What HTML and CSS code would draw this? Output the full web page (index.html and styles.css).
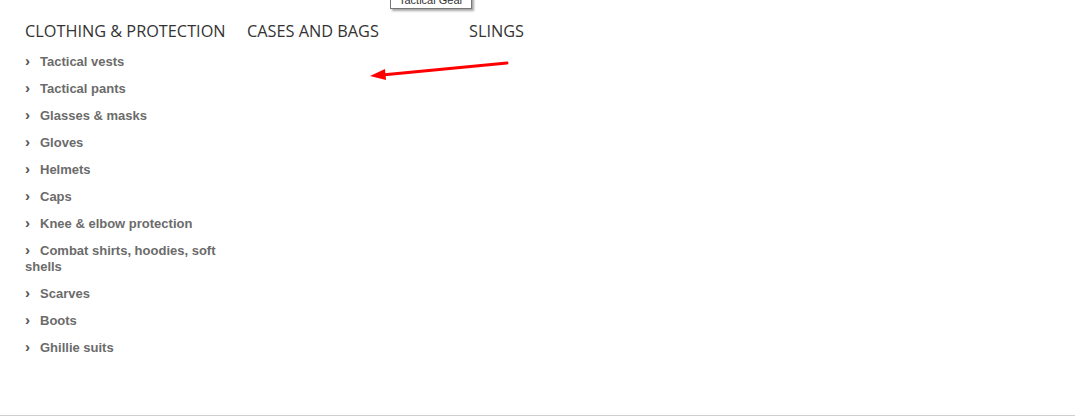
FILE: index.html
```html
<!DOCTYPE html>
<html lang="en">
<head>
  <meta charset="UTF-8">
  <title>Tactical Gear menu</title>
  <link rel="stylesheet" href="styles.css">
</head>
<body>
  <div class="menu">
    <div class="tooltip">Tactical Gear</div>

    <div class="column">
      <h3>Clothing &amp; Protection</h3>
      <ul>
        <li><a href="#">Tactical vests</a></li>
        <li><a href="#">Tactical pants</a></li>
        <li><a href="#">Glasses &amp; masks</a></li>
        <li><a href="#">Gloves</a></li>
        <li><a href="#">Helmets</a></li>
        <li><a href="#">Caps</a></li>
        <li><a href="#">Knee &amp; elbow protection</a></li>
        <li><a href="#">Combat shirts, hoodies, soft shells</a></li>
        <li><a href="#">Scarves</a></li>
        <li><a href="#">Boots</a></li>
        <li><a href="#">Ghillie suits</a></li>
      </ul>
    </div>

    <div class="column">
      <h3>Cases and bags</h3>
    </div>

    <div class="column">
      <h3>Slings</h3>
    </div>

    <svg class="arrow" width="150" height="24" viewBox="0 0 150 24">
      <line x1="139" y1="3" x2="14" y2="15" stroke="#ff0000" stroke-width="3" stroke-linecap="round"/>
      <polygon points="2,16 17,9 18,20" fill="#ff0000"/>
    </svg>
  </div>
</body>
</html>
```

FILE: styles.css
```css
html, body {
  margin: 0;
  padding: 0;
  background: #fff;
}

.menu {
  position: relative;
  display: flex;
  box-sizing: border-box;
  min-height: 416px;
  padding: 20px 0 0 25px;
  border-bottom: 1px solid #cfcfcf;
}

.column {
  width: 202px;
  padding-right: 20px;
}

.column h3 {
  margin: 0 0 12px;
  font-family: 'Open Sans', sans-serif;
  font-size: 16.3px;
  font-weight: 400;
  line-height: 22px;
  text-transform: uppercase;
  color: #333;
  white-space: nowrap;
}

.column ul {
  list-style: none;
  margin: 0;
  padding: 0;
}

.column li {
  margin-bottom: 11px;
  font-family: 'Liberation Sans', Arial, sans-serif;
  font-size: 13px;
  font-weight: 700;
  line-height: 16px;
}

.column li a {
  color: #6b6b6b;
  text-decoration: none;
}

.column li a::before {
  content: "\203A";
  display: inline-block;
  width: 15px;
  color: #555;
  font-size: 15px;
  line-height: 14px;
}

.tooltip {
  position: absolute;
  left: 390px;
  top: -9px;
  padding: 2px 8px;
  font-family: 'Liberation Sans', Arial, sans-serif;
  font-size: 11px;
  line-height: 12px;
  color: #333;
  background: #fff;
  border: 1px solid #777;
  box-shadow: 2px 2px 2px rgba(0, 0, 0, 0.35);
}

.arrow {
  position: absolute;
  left: 368px;
  top: 60px;
}
```
